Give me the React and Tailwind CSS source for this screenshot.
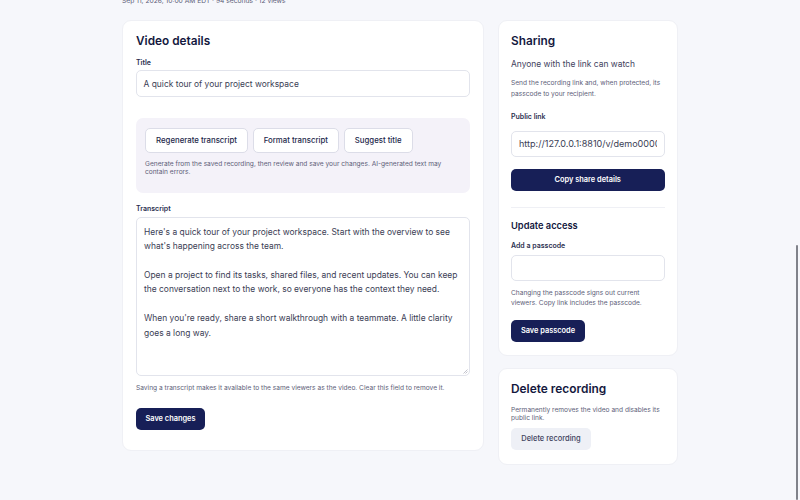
export default function App() {
    return (
        <div className="relative h-[500px] w-[800px] overflow-hidden bg-[#f6f7fb] font-['Inter',sans-serif] text-[#14183e] antialiased">
            <div className="ml-[122px] w-[556px] -mt-[3px]">
                <p className="h-[23px] text-[6.7px] leading-[9px] text-[#5d6078]">Sep 11, 2026, 10:00 AM EDT · 94 seconds · 12 views</p>

                <div className="grid grid-cols-[361.5px_180.5px] gap-[14px] items-start">
                    {/* Video details */}
                    <div className="h-[431px] rounded-[9px] border border-[#eff0f5] bg-white px-[13px] pt-[12px]">
                        <h2 className="text-[11.8px] leading-[16px] font-semibold">Video details</h2>
                        <label className="mt-[8.5px] block text-[7px] leading-[10px] font-semibold text-[#2c3050]">Title</label>
                        <div className="mt-[2.5px] flex h-[26.7px] items-center rounded-[5px] border border-[#e2e4ec] px-[6.5px] pt-[1px] text-[8.45px] text-[#3b3e55]">
                            A quick tour of your project workspace
                        </div>

                        <div className="mt-[21.6px] h-[74.7px] rounded-[7px] bg-[#f4f2f9] pl-[9px] pr-[8px] pt-[10px]">
                            <div className="flex gap-[4.6px]">
                                <button className="h-[24.7px] w-[103px] rounded-[5px] border border-[#dcdde8] bg-white text-[7.8px] font-medium text-[#23274a]">Regenerate transcript</button>
                                <button className="h-[24.7px] w-[86.5px] rounded-[5px] border border-[#dcdde8] bg-white text-[7.8px] font-medium text-[#23274a]">Format transcript</button>
                                <button className="h-[24.7px] w-[69px] rounded-[5px] border border-[#dcdde8] bg-white text-[7.8px] font-medium text-[#23274a]">Suggest title</button>
                            </div>
                            <p className="mt-[6.7px] text-[6.6px] leading-[8px] text-[#5d6078]">Generate from the saved recording, then review and save your changes. AI-generated text may contain errors.</p>
                        </div>

                        <label className="mt-[10.8px] block text-[7px] leading-[10px] font-semibold text-[#2c3050]">Transcript</label>
                        <div className="relative mt-[3.2px] h-[158.7px] rounded-[5px] border border-[#e2e4ec] px-[7px] pt-[6.8px] text-[8.45px] leading-[14.4px] text-[#3b3e55]">
                            <p>Here's a quick tour of your project workspace. Start with the overview to see what's happening across the team.</p>
                            <p className="mt-[14.4px]">Open a project to find its tasks, shared files, and recent updates. You can keep the conversation next to the work, so everyone has the context they need.</p>
                            <p className="mt-[14.4px]">When you're ready, share a short walkthrough with a teammate. A little clarity goes a long way.</p>
                            <svg className="absolute right-[1px] bottom-[1px]" width="5" height="5" viewBox="0 0 5 5" stroke="#9a9cab" strokeWidth="0.6">
                                <path d="M0.5 4.5 4.5 0.5M2.5 4.5 4.5 2.5" />
                            </svg>
                        </div>
                        <p className="mt-[8px] text-[6.6px] leading-[9px] text-[#5d6078]">Saving a transcript makes it available to the same viewers as the video. Clear this field to remove it.</p>
                        <button className="mt-[15.2px] h-[22.3px] w-[69px] rounded-[5px] bg-[#171f57] text-[7.4px] font-semibold text-white">Save changes</button>
                    </div>

                    <div className="flex flex-col gap-[12px]">
                        {/* Sharing */}
                        <div className="h-[335.5px] rounded-[9px] border border-[#eff0f5] bg-white px-[12.5px] pt-[12px]">
                            <h2 className="text-[11.8px] leading-[16px] font-semibold">Sharing</h2>
                            <p className="mt-[9px] text-[8.45px] leading-[12px] text-[#3f4360]">Anyone with the link can watch</p>
                            <p className="mt-[8px] text-[6.6px] leading-[10.5px] text-[#5d6078]">Send the recording link and, when protected, its passcode to your recipient.</p>
                            <label className="mt-[12.5px] block text-[7px] leading-[10px] font-semibold text-[#2c3050]">Public link</label>
                            <div className="mt-[9.5px] flex h-[26px] items-center overflow-hidden rounded-[5px] border border-[#e2e4ec] px-[7px] text-[9.05px] whitespace-nowrap text-[#3b3e55]">
                                <span className="overflow-hidden">http://127.0.0.1:8810/v/demo0000000</span>
                            </div>
                            <button className="mt-[11.5px] h-[22.5px] w-full rounded-[5px] bg-[#171f57] text-[7.4px] font-semibold text-white">Copy share details</button>
                            <div className="mt-[15.5px] border-t border-[#eff0f5]" />
                            <h3 className="mt-[12px] text-[9.3px] leading-[12px] font-semibold">Update access</h3>
                            <label className="mt-[9.5px] block text-[7px] leading-[10px] font-semibold text-[#2c3050]">Add a passcode</label>
                            <div className="mt-[3.5px] h-[26.7px] rounded-[5px] border border-[#e2e4ec]" />
                            <p className="mt-[6.5px] text-[6.6px] leading-[10.5px] text-[#5d6078]">Changing the passcode signs out current viewers. Copy link includes the passcode.</p>
                            <button className="mt-[11px] h-[22.7px] w-[74px] rounded-[5px] bg-[#171f57] text-[7.4px] font-semibold text-white">Save passcode</button>
                        </div>

                        {/* Delete */}
                        <div className="h-[97px] rounded-[9px] border border-[#eff0f5] bg-white px-[12.5px] pt-[12px]">
                            <h2 className="text-[11.9px] leading-[16px] font-semibold">Delete recording</h2>
                            <p className="mt-[9px] text-[6.6px] leading-[8px] text-[#5d6078]">Permanently removes the video and disables its public link.</p>
                            <button className="mt-[6.3px] h-[22.6px] w-[80px] rounded-[5px] bg-[#eef0f6] text-[7.5px] font-medium text-[#3f4360]">Delete recording</button>
                        </div>
                    </div>
                </div>
            </div>

            {/* overlay scrollbar */}
            <div className="absolute top-[245px] right-[2px] h-[255px] w-[2.5px] rounded-full bg-[#80828a]" />
        </div>
    );
}
